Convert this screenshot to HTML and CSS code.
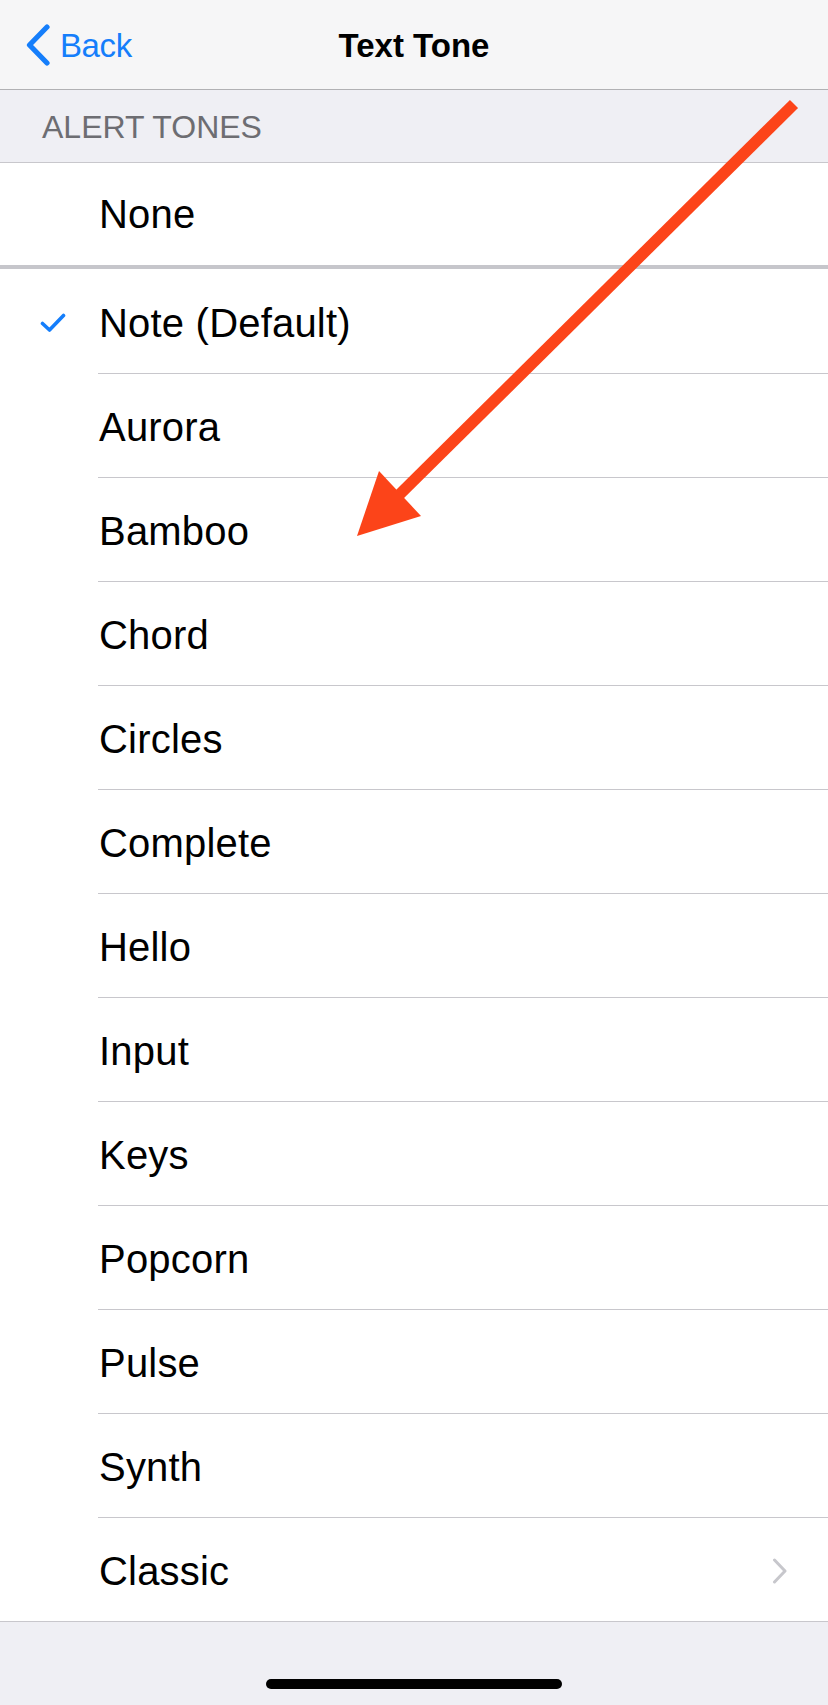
FILE: index.html
```html
<!DOCTYPE html>
<html lang="en">
<head>
<meta charset="utf-8">
<title>Text Tone</title>
<link rel="stylesheet" href="styles.css">
</head>
<body>
<div class="screen">
  <header class="nav">
    <div class="nav-left">
      <svg class="back-chevron" width="26" height="42" viewBox="0 0 26 42" aria-hidden="true">
        <path d="M22 3 L4.5 21 L22 39" fill="none" stroke="#157efb" stroke-width="5.2" stroke-linecap="round" stroke-linejoin="round"/>
      </svg>
      <span class="back-label">Back</span>
    </div>
    <h1 class="nav-title">Text Tone</h1>
    <div class="nav-right"></div>
  </header>

  <div class="section-header">ALERT TONES</div>

  <div class="group group-none">
    <div class="row row-single">
      <div class="check-cell"></div>
      <div class="cell cell-plain">None</div>
    </div>
  </div>

  <div class="group group-tones">
    <div class="row">
      <div class="check-cell">
        <svg width="26" height="20" viewBox="0 0 26 20" aria-hidden="true">
          <path d="M2.5 10.5 L9.5 17 L23.5 2.5" fill="none" stroke="#157efb" stroke-width="3.6" stroke-linecap="round" stroke-linejoin="round"/>
        </svg>
      </div>
      <div class="cell">Note (Default)</div>
    </div>
    <div class="row"><div class="check-cell"></div><div class="cell">Aurora</div></div>
    <div class="row"><div class="check-cell"></div><div class="cell">Bamboo</div></div>
    <div class="row"><div class="check-cell"></div><div class="cell">Chord</div></div>
    <div class="row"><div class="check-cell"></div><div class="cell">Circles</div></div>
    <div class="row"><div class="check-cell"></div><div class="cell">Complete</div></div>
    <div class="row"><div class="check-cell"></div><div class="cell">Hello</div></div>
    <div class="row"><div class="check-cell"></div><div class="cell">Input</div></div>
    <div class="row"><div class="check-cell"></div><div class="cell">Keys</div></div>
    <div class="row"><div class="check-cell"></div><div class="cell">Popcorn</div></div>
    <div class="row"><div class="check-cell"></div><div class="cell">Pulse</div></div>
    <div class="row"><div class="check-cell"></div><div class="cell">Synth</div></div>
    <div class="row row-last">
      <div class="check-cell"></div>
      <div class="cell cell-last">
        <span>Classic</span>
        <svg class="disclosure" width="18" height="26" viewBox="0 0 18 26" aria-hidden="true">
          <path d="M3.5 2 L14 13 L3.5 24" fill="none" stroke="#c7c7cc" stroke-width="3" stroke-linecap="round" stroke-linejoin="round"/>
        </svg>
      </div>
    </div>
  </div>

  <footer class="home-area">
    <div class="home-indicator"></div>
  </footer>

  <svg class="annotation" width="828" height="1705" viewBox="0 0 828 1705" aria-hidden="true">
    <line x1="794" y1="104" x2="397" y2="497" stroke="#fc4419" stroke-width="11.5" stroke-linecap="butt"/>
    <polygon points="357,536 379,471 421,516" fill="#fc4419"/>
  </svg>
</div>
</body>
</html>
```

FILE: styles.css
```css
html, body {
  margin: 0;
  padding: 0;
  background: #efeff4;
}

body {
  font-family: "Liberation Sans", Arial, sans-serif;
  color: #000;
}

.screen {
  position: relative;
  width: 828px;
  height: 1705px;
  overflow: hidden;
  display: flex;
  flex-direction: column;
  background: #efeff4;
}

.nav {
  height: 89px;
  flex: none;
  background: #f6f6f7;
  border-bottom: 1px solid #b1b1b4;
  display: grid;
  grid-template-columns: 1fr auto 1fr;
  align-items: center;
}

.nav-left {
  display: flex;
  align-items: center;
  gap: 9px;
  padding-left: 25px;
  color: #157efb;
}

.back-chevron {
  display: block;
  margin-top: 1px;
}

.back-label {
  font-size: 33px;
  letter-spacing: -0.4px;
  padding-top: 2px;
}

.nav-title {
  margin: 0;
  font-size: 33px;
  font-weight: 700;
  letter-spacing: 0;
  padding-top: 2px;
}

.section-header {
  flex: none;
  height: 73px;
  box-sizing: border-box;
  padding: 19px 0 0 42px;
  font-size: 32px;
  line-height: 36px;
  color: #6d6d72;
  border-bottom: 1px solid #c8c7cc;
}

.group {
  background: #fff;
  flex: none;
}

.group-none {
  border-bottom: 4px solid #c6c6cb;
}

.group-tones {
  padding-top: 1px;
  border-bottom: 1px solid #c8c7cc;
}

.row {
  display: grid;
  grid-template-columns: 98px 1fr;
  height: 104px;
}

.row-single {
  height: 102px;
}

.row-last {
  height: 103px;
}

.check-cell {
  display: flex;
  align-items: center;
  padding-left: 40px;
  padding-top: 2px;
}

.check-cell svg {
  display: block;
}

.cell {
  display: flex;
  align-items: center;
  box-sizing: border-box;
  padding-left: 1px;
  padding-top: 3px;
  font-size: 40px;
  letter-spacing: 0.2px;
  border-bottom: 1px solid #c8c7cc;
}

.cell-plain {
  border-bottom: none;
  padding-top: 0;
}

.cell-last {
  border-bottom: none;
  justify-content: space-between;
  padding-right: 39px;
}

.disclosure {
  display: block;
}

.home-area {
  flex: 1;
  display: flex;
  justify-content: center;
  padding-top: 57px;
  box-sizing: border-box;
}

.home-indicator {
  width: 296px;
  height: 10px;
  border-radius: 5px;
  background: #000;
}

.annotation {
  position: absolute;
  top: 0;
  left: 0;
  pointer-events: none;
}
```
